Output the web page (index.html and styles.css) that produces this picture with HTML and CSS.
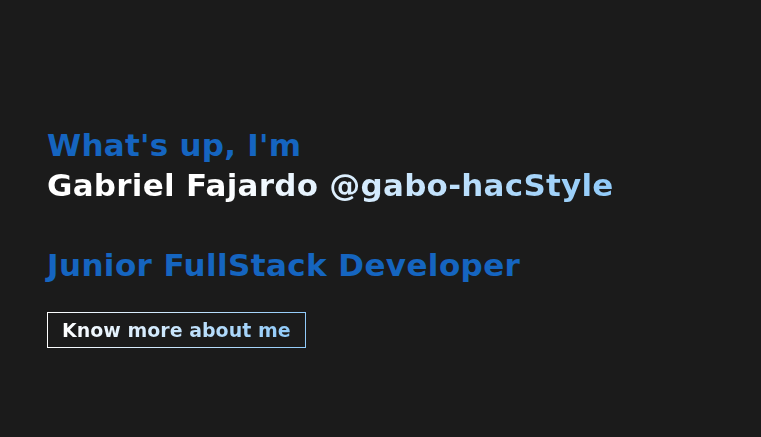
FILE: index.html
```html
<!DOCTYPE html>
<html lang="en">
<head>
<meta charset="utf-8">
<title>Gabriel Fajardo</title>
<link rel="stylesheet" href="styles.css">
</head>
<body>
<main class="hero">
  <h1 class="hero-title">
    <span class="greet">What's up, I'm</span>
    <span class="name">Gabriel Fajardo @gabo-hacStyle</span>
  </h1>
  <h2 class="role">Junior FullStack Developer</h2>
  <a class="more-btn" href="#about"><span class="grad">Know more about me</span></a>
</main>
</body>
</html>
```

FILE: styles.css
```css
* { box-sizing: border-box; }
html, body { margin: 0; height: 100%; }
body {
  background: #1b1b1b;
  font-family: "DejaVu Sans", "Open Sans", sans-serif;
}
.hero {
  padding: 125px 47px 0;
  display: flex;
  flex-direction: column;
  align-items: flex-start;
}
.hero-title {
  margin: 0;
  font-size: 31px;
  font-weight: 700;
  line-height: 40px;
  letter-spacing: 0.25px;
  display: flex;
  flex-direction: column;
}
.greet { color: #1565c0; }
.name {
  background: linear-gradient(90deg, #ffffff 0%, #ffffff 30%, #90caf9 100%);
  -webkit-background-clip: text;
  background-clip: text;
  color: transparent;
}
.role {
  margin: 40px 0 0;
  font-size: 31px;
  font-weight: 700;
  line-height: 40px;
  letter-spacing: 0.4px;
  color: #1565c0;
}
.more-btn {
  margin-top: 27px;
  display: inline-block;
  padding: 0 14px;
  height: 36px;
  line-height: 34px;
  border: 1px solid transparent;
  border-image: linear-gradient(90deg, #ffffff, #90caf9) 1;
  text-decoration: none;
  font-size: 19px;
  font-weight: 600;
}
.grad {
  background: linear-gradient(90deg, #ffffff 0%, #90caf9 100%);
  -webkit-background-clip: text;
  background-clip: text;
  color: transparent;
}
```
